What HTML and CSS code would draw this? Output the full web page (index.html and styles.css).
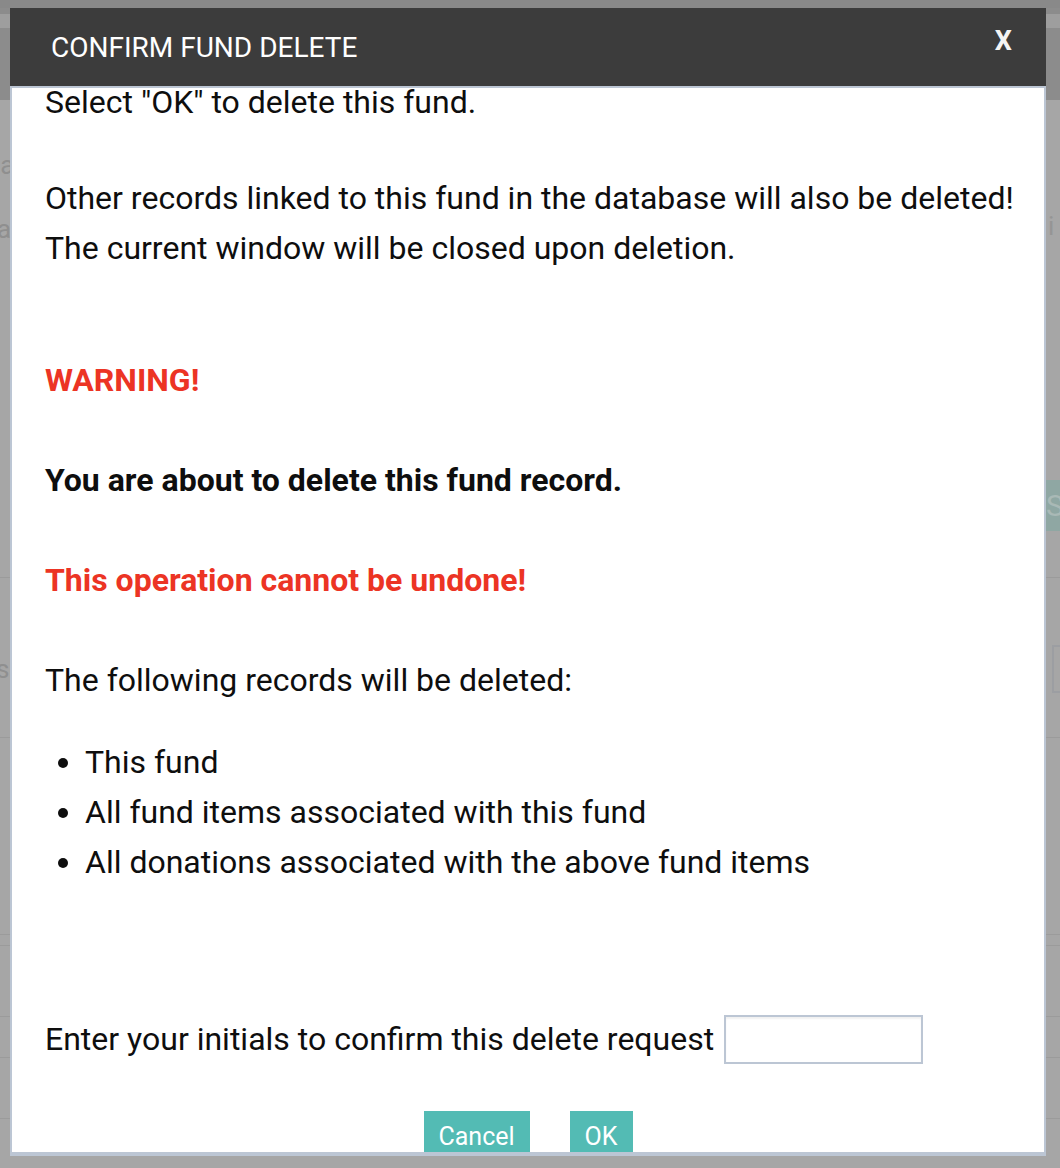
FILE: index.html
```html
<!DOCTYPE html>
<html>
<head>
<meta charset="utf-8">
<link rel="stylesheet" href="styles.css">
</head>
<body>
<div class="page">
  <div class="pg-top"></div>
  <div class="pg-head"><div class="pg-strip"></div></div>
  <div class="pg-row row-a">
    <div class="gut-l"><div class="ghost g-la">la</div><div class="ghost g-a">a</div></div>
    <div class="mid"></div>
    <div class="gut-r"><div class="ghost g-i">i</div><div class="ghost-btn">Sa</div></div>
  </div>
  <div class="pg-row row-b">
    <div class="gut-l"><div class="ghost g-s">s</div></div>
    <div class="mid"></div>
    <div class="gut-r"><div class="ghost-input"></div></div>
  </div>
  <div class="pg-row row-c"></div>
  <div class="pg-row row-d"></div>
  <div class="pg-row row-e"></div>
  <div class="pg-row row-f"></div>
  <div class="pg-row row-g"></div>
</div>

<div class="modal">
  <div class="modal-head">
    <div class="modal-title">CONFIRM FUND DELETE</div>
    <div class="modal-close">X</div>
  </div>
  <div class="modal-body">
    <div class="content">
      <p class="l1">Select "OK" to delete this fund.</p>
      <p class="l2">Other records linked to this fund in the database will also be deleted!<br>The current window will be closed upon deletion.</p>
      <p class="warn">WARNING!</p>
      <p class="strong">You are about to delete this fund record.</p>
      <p class="warn2">This operation cannot be undone!</p>
      <p class="following">The following records will be deleted:</p>
      <ul class="list">
        <li>This fund</li>
        <li>All fund items associated with this fund</li>
        <li>All donations associated with the above fund items</li>
      </ul>
      <div class="confirm">
        <span>Enter your initials to confirm this delete request</span>
        <input class="initials" type="text">
      </div>
      <div class="buttons">
        <button class="btn">Cancel</button>
        <button class="btn">OK</button>
      </div>
    </div>
  </div>
</div>
</body>
</html>
```

FILE: styles.css
```css
html, body {
  margin: 0;
  padding: 0;
}
body {
  width: 1060px;
  height: 1168px;
  overflow: hidden;
  background: #a6a6a6;
  font-family: "Roboto", "Liberation Sans", sans-serif;
  position: relative;
}

/* underlying page behind overlay */
.page {
  width: 1060px;
}
.pg-top {
  height: 8px;
  background: #898989;
}
.pg-head {
  height: 92px;
  background: #8c8c8c;
  padding-top: 6px;
  box-sizing: border-box;
}
.pg-strip {
  height: 14px;
  background: #9e9e9e;
}
.pg-row {
  display: grid;
  grid-template-columns: 10px 1fr 14px;
  border-bottom: 1px solid #9b9b9b;
  box-sizing: border-box;
}
.row-a { height: 478px; }
.row-b { height: 160px; }
.row-c { height: 197px; }
.row-d { height: 11px; }
.row-e { height: 71px; }
.row-f { height: 41px; }
.row-g { height: 61px; }
.gut-l, .gut-r {
  overflow: hidden;
  position: relative;
}
.ghost {
  color: #8f8f8f;
  font-size: 26px;
  line-height: 30px;
  white-space: nowrap;
}
.g-la { margin-top: 50px; margin-left: -6px; }
.g-a { margin-top: 34px; margin-left: -3px; }
.g-s { margin-top: 76px; margin-left: -4px; }
.g-i { margin-top: 111px; margin-left: 2px; color: #959595; }
.ghost-btn {
  margin-top: 239px;
  height: 51px;
  background: #8fa7a3;
  color: #a9b9b6;
  font-size: 30px;
  line-height: 51px;
  white-space: nowrap;
}
.ghost-input {
  margin-top: 67px;
  margin-left: 6px;
  height: 48px;
  border: 2px solid #9c9ea2;
  border-right: none;
  box-sizing: border-box;
}

/* modal */
.modal {
  position: absolute;
  left: 10px;
  top: 8px;
  width: 1036px;
  height: 1148px;
  display: flex;
  flex-direction: column;
}
.modal-head {
  height: 78px;
  flex: none;
  background: #3c3c3c;
  display: flex;
  justify-content: space-between;
  align-items: flex-start;
  padding: 0 34px 0 41px;
}
.modal-title {
  color: #ffffff;
  font-size: 28px;
  line-height: 80px;
}
.modal-close {
  color: #f4f4f4;
  font-size: 27px;
  font-weight: 700;
  line-height: 32px;
  margin-top: 17px;
}
.modal-body {
  flex: 1;
  background: #ffffff;
  border: 2px solid #bcc6d4;
  border-bottom-width: 4px;
  overflow: hidden;
}
.content {
  margin-top: -11px;
  padding-left: 33px;
  font-size: 32px;
  line-height: 50px;
  color: #0e0e0e;
}
.content p {
  margin: 0;
}
.content .l2 { margin-top: 46px; }
.content .warn {
  margin-top: 82px;
  color: #ec3424;
  font-weight: 700;
}
.content .strong {
  margin-top: 50px;
  font-weight: 700;
}
.content .warn2 {
  margin-top: 50px;
  color: #ec3424;
  font-weight: 700;
}
.content .following { margin-top: 50px; }
.list {
  margin: 32px 0 0 0;
  padding-left: 40px;
}
.confirm {
  margin-top: 127px;
  display: flex;
  align-items: flex-end;
  height: 50px;
}
.confirm span {
  align-self: center;
}
.initials {
  margin-left: 10px;
  width: 199px;
  height: 49px;
  box-sizing: border-box;
  border: 2px solid #bcc6d4;
  box-shadow: inset 0 2px 2px rgba(0, 0, 0, 0.06);
  background: #fff;
  outline: none;
  padding: 0 8px;
  font-family: inherit;
  font-size: 24px;
}
.buttons {
  margin-top: 47px;
  display: flex;
  justify-content: center;
  gap: 40px;
  padding-right: 33px;
}
.btn {
  background: #53bbb4;
  color: #ffffff;
  border: none;
  border-radius: 0;
  font-family: "Roboto", "Liberation Sans", sans-serif;
  font-size: 25px;
  line-height: 34px;
  padding: 9px 15px 8px;
  margin: 0;
}
```
